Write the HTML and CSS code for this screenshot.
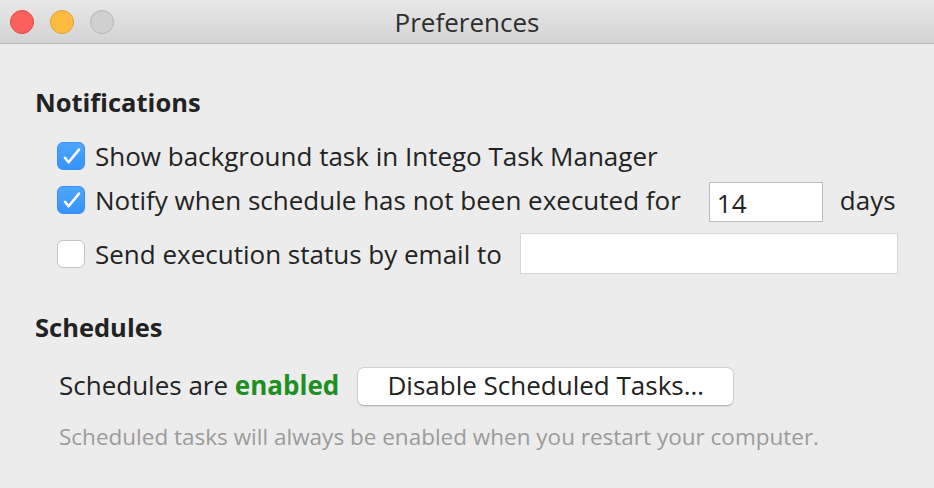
FILE: index.html
```html
<!DOCTYPE html>
<html>
<head>
<meta charset="utf-8">
<link rel="stylesheet" href="styles.css">
</head>
<body>
<div class="window">
  <div class="titlebar">
    <div class="lights">
      <span class="light red"></span>
      <span class="light yellow"></span>
      <span class="light gray"></span>
    </div>
    <div class="title">Preferences</div>
  </div>
  <div class="content">
    <h2 class="heading">Notifications</h2>
    <div class="row row1">
      <span class="cb checked"><svg viewBox="0 0 28 28" width="28" height="28"><path d="M8 15.8 L11.6 20.3 L22 7.6" fill="none" stroke="#fff" stroke-width="2.6" stroke-linecap="round" stroke-linejoin="round"/></svg></span>
      <span class="label">Show background task in Intego Task Manager</span>
    </div>
    <div class="row row2">
      <span class="cb checked"><svg viewBox="0 0 28 28" width="28" height="28"><path d="M8 15.8 L11.6 20.3 L22 7.6" fill="none" stroke="#fff" stroke-width="2.6" stroke-linecap="round" stroke-linejoin="round"/></svg></span>
      <span class="label">Notify when schedule has not been executed for</span>
      <span class="field small">14</span>
      <span class="label days">days</span>
    </div>
    <div class="row row3">
      <span class="cb"></span>
      <span class="label">Send execution status by email to</span>
      <span class="field wide"></span>
    </div>
    <h2 class="heading schedules">Schedules</h2>
    <div class="row status">
      <span class="label status-label">Schedules are <b class="enabled">enabled</b></span>
      <span class="button">Disable Scheduled Tasks…</span>
    </div>
    <p class="help">Scheduled tasks will always be enabled when you restart your computer.</p>
  </div>
</div>
</body>
</html>
```

FILE: styles.css
```css
html, body {
  margin: 0;
  padding: 0;
  background: #ececec;
}
.window {
  width: 934px;
  height: 488px;
  background: #ececec;
  font-family: "Open Sans", "Liberation Sans", Arial, sans-serif;
  color: #232323;
  overflow: hidden;
}
.titlebar {
  height: 43px;
  border-bottom: 1px solid #b6b6b6;
  background: linear-gradient(#e8e8e8, #d3d3d3);
  display: flex;
  align-items: center;
  position: relative;
}
.lights {
  display: flex;
  gap: 16px;
  padding-left: 10px;
}
.light {
  width: 22px;
  height: 22px;
  border-radius: 50%;
  display: block;
}
.red { background: #fc605c; border: 1px solid #de4a45; }
.yellow { background: #fdbc40; border: 1px solid #dea236; }
.gray { background: #d0d0d0; border: 1px solid #b6b6b6; }
.title {
  position: absolute;
  left: 0;
  right: 0;
  text-align: center;
  font-size: 26px;
  line-height: 30px;
  color: #2e2e2e;
  top: 7px;
}
.content {
  padding: 0 0 0 35px;
}
.heading {
  margin: 45px 0 0 0;
  font-size: 25.5px;
  font-weight: bold;
  line-height: 26px;
  color: #222;
}
.heading.schedules {
  margin-top: 40px;
}
.row {
  display: flex;
  align-items: center;
  font-size: 26px;
  line-height: 30px;
}
.row1 { margin-top: 26px; padding-left: 22px; }
.row2 { margin-top: 7px; padding-left: 22px; }
.row3 { margin-top: 11px; padding-left: 22px; height: 41px; }
.cb {
  width: 26px;
  height: 26px;
  border-radius: 6px;
  border: 1px solid #c2c2c2;
  background: #fff;
  margin-right: 10px;
  display: flex;
  flex: none;
}
.cb.checked {
  background: linear-gradient(#4ea6fd, #3593fc);
  border-color: #3b8ff2;
}
.cb svg { margin: -1px; }
.field {
  background: #fff;
  border: 1px solid #bdbdbd;
  box-sizing: border-box;
  font-size: 26px;
  display: flex;
  align-items: center;
  padding: 2px 0 0 7px;
}
.small {
  width: 114px;
  height: 40px;
  margin-left: 28px;
  margin-top: 4px;
}
.days { margin-left: 17px; }
.wide {
  width: 378px;
  height: 41px;
  margin-left: 18px;
  border-color: #d6d6d6;
}
.status {
  margin-top: 27px;
  padding-left: 24px;
  height: 39px;
}
.status-label {
  margin-top: -3px;
}
.enabled {
  color: #1e8f22;
  font-weight: bold;
}
.button {
  margin-left: 18px;
  width: 377px;
  height: 39px;
  box-sizing: border-box;
  background: #fff;
  border: 1px solid #cfcfcf;
  border-bottom-color: #b5b5b5;
  border-radius: 7px;
  box-shadow: 0 1px 1px rgba(0,0,0,0.08);
  display: flex;
  align-items: center;
  justify-content: center;
  padding-bottom: 3px;
  font-size: 26px;
  color: #222;
}
.help {
  margin: 18px 0 0 24px;
  font-size: 22.5px;
  line-height: 26px;
  color: #9b9b9b;
}
```
